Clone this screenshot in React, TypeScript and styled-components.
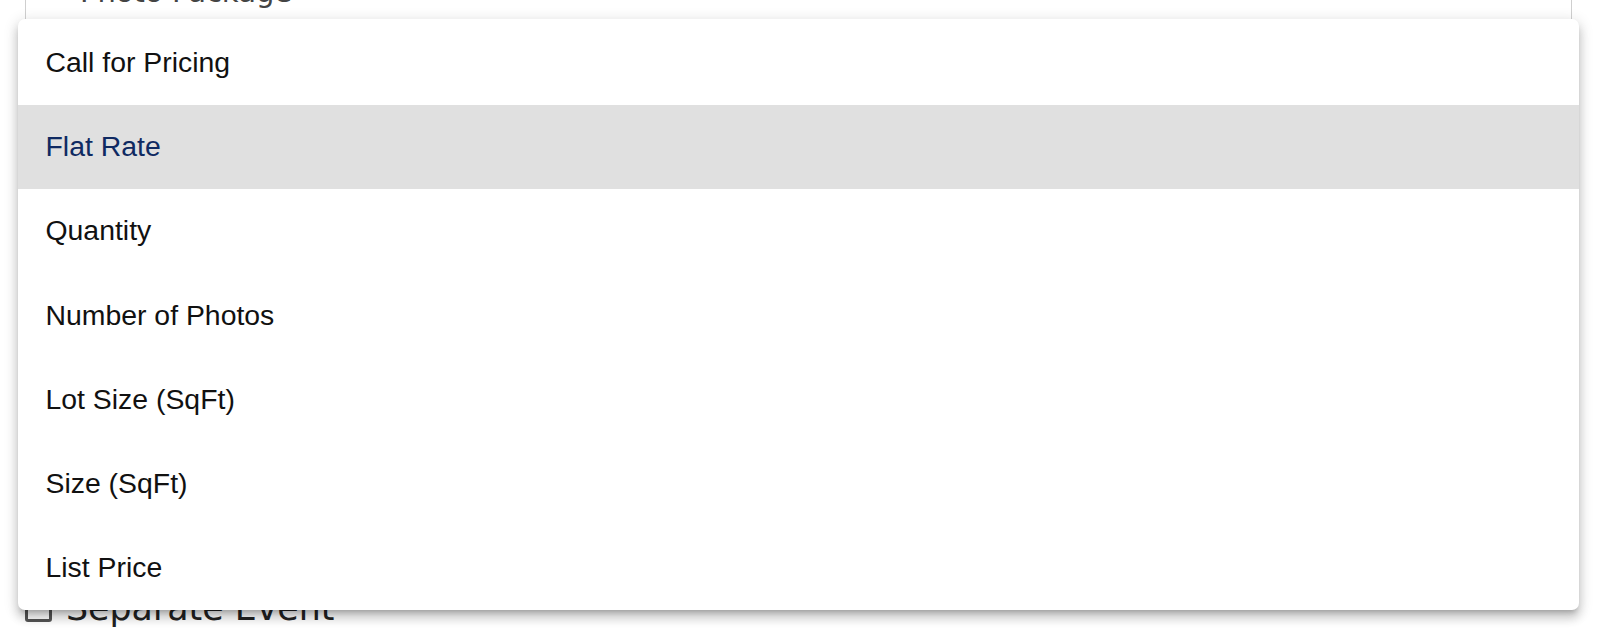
import React from "react";
import styled, { createGlobalStyle } from "styled-components";

const GlobalStyle = createGlobalStyle`
  html, body {
    margin: 0;
    padding: 0;
    background: #ffffff;
    overflow: hidden;
  }
`;

const Page = styled.div`
  position: relative;
  width: 1600px;
  height: 633px;
  overflow: hidden;
  font-family: "Liberation Sans", Arial, sans-serif;
`;

const Form = styled.div`
  display: flex;
  flex-direction: column;
  padding-left: 25px;
  width: 1547px;
`;

const FieldBox = styled.div`
  height: 586px;
  border-left: 1px solid #cfcfcf;
  border-right: 1px solid #cfcfcf;
  border-bottom: 1px solid #cfcfcf;
  overflow: hidden;
`;

const FieldText = styled.div`
  margin-top: -25.5px;
  padding-left: 54px;
  font-family: "DejaVu Sans", sans-serif;
  font-size: 29px;
  line-height: 34px;
  color: #444;
`;

const CheckRow = styled.label`
  display: flex;
  align-items: center;
  gap: 14px;
  margin-top: 5px;
  height: 32px;
`;

const CheckBox = styled.span`
  box-sizing: border-box;
  width: 27px;
  height: 27px;
  border: 3px solid #555;
  border-radius: 3px;
  background: #fff;
`;

const CheckLabel = styled.span`
  font-family: "DejaVu Sans", sans-serif;
  font-size: 34.8px;
  line-height: 36px;
  color: #222;
`;

const Menu = styled.ul`
  position: absolute;
  top: 19px;
  left: 17.5px;
  width: 1561px;
  margin: 0;
  padding: 1.5px 0 0;
  list-style: none;
  background: #ffffff;
  border-radius: 7px;
  box-shadow: 0px 5px 5px -3px rgba(0, 0, 0, 0.2),
    0px 8px 10px 1px rgba(0, 0, 0, 0.14), 0px 3px 14px 2px rgba(0, 0, 0, 0.12);
  overflow: hidden;
`;

const Item = styled.li<{ $selected?: boolean }>`
  display: flex;
  align-items: center;
  height: 84.2px;
  padding-left: 28px;
  font-size: 28.4px;
  color: ${(p) => (p.$selected ? "#0f2a62" : "#111111")};
  background: ${(p) => (p.$selected ? "#e0e0e0" : "transparent")};
`;

const options = [
  "Call for Pricing",
  "Flat Rate",
  "Quantity",
  "Number of Photos",
  "Lot Size (SqFt)",
  "Size (SqFt)",
  "List Price",
];

export default function App() {
  return (
    <Page>
      <GlobalStyle />
      <Form>
        <FieldBox>
          <FieldText>Photo Package</FieldText>
        </FieldBox>
        <CheckRow>
          <CheckBox />
          <CheckLabel>Separate Event</CheckLabel>
        </CheckRow>
      </Form>
      <Menu role="listbox">
        {options.map((o) => (
          <Item key={o} $selected={o === "Flat Rate"} role="option">
            {o}
          </Item>
        ))}
      </Menu>
    </Page>
  );
}
